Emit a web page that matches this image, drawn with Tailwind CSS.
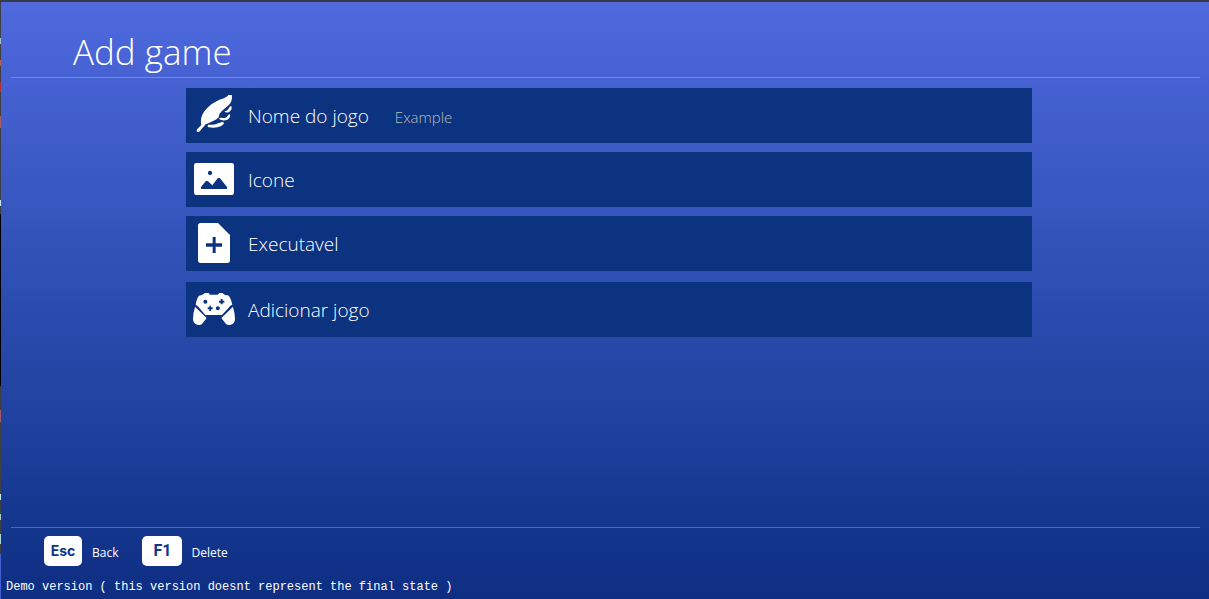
<!DOCTYPE html>
<html lang="pt">
<head>
<meta charset="utf-8">
<meta name="viewport" content="width=device-width, initial-scale=1">
<title>Add game</title>
<script src="https://cdn.jsdelivr.net/npm/@tailwindcss/browser@4"></script>
</head>
<body class="min-h-screen flex flex-col border-t-2 border-[#3a3b46] bg-[#3f3f42] font-['Open_Sans',sans-serif] text-white">
<div class="flex grow">
  <div class="w-px shrink-0 flex flex-col" aria-hidden="true">
    <span class="h-9"></span><span class="h-1.5 bg-[#9fc4cc]"></span><span class="h-4"></span><span class="h-1.5 bg-[#c05a4a]"></span><span class="h-4"></span><span class="h-2.5 bg-[#b03030]"></span><span class="h-6"></span><span class="h-3 bg-[#a85a62]"></span><span class="h-18"></span><span class="h-1.5 bg-[#bfeaf5]"></span><span class="h-2"></span><span class="h-43 bg-black"></span><span class="h-6"></span><span class="h-3 bg-[#a85a62]"></span><span class="h-18"></span><span class="h-1.5 bg-[#bfeaf5]"></span><span class="h-3.5"></span><span class="h-1.5 bg-[#a9cdd0]"></span><span class="h-3.5"></span><span class="h-2.5 bg-[#a9d9dc]"></span><span class="h-2.5"></span><span class="grow bg-[#4460d0]"></span>
  </div>
  <div class="flex min-w-0 grow flex-col bg-linear-to-b/srgb from-[#4f69de] via-[#2c4db0] to-[#0d2e82]">
    <header class="mr-[9px] ml-[10px] border-b border-[#7089e0] pt-[25px] pl-[62px]">
      <h1 class="text-[35px] leading-[50px] font-light">Add game</h1>
    </header>

    <main class="flex grow flex-col items-center pt-[10px] pl-2">
      <form class="flex w-[846px] max-w-full flex-col gap-[9px]">
        <div class="flex h-[55px] items-center bg-[#0c337f] pl-[7px]">
          <svg class="size-[42px] shrink-0" viewBox="39 33 126 126" fill="currentColor" aria-hidden="true">
            <path d="M50 142 Q49 136 55 132 L64 123 Q58 98 78 76 Q95 57 122 46 Q142 40 147 31 Q152 28 155 31 Q158 45 152 56 Q147 64 136 72 Q123 82 118 90 Q119 101 104 109 Q88 117 77 121 L60 141 Q54 147 50 142Z"/>
            <path d="M154 66 Q158 77 147 84 Q138 88 133 82 Q144 80 149 68Z M150 91 Q153 101 141 108 Q126 112 116 104 Q122 99 129 102 Q141 102 145 92Z M129 113 Q136 118 124 126 Q106 135 83 129 L84 122 Q102 124 114 118Z"/>
          </svg>
          <label for="name" class="ml-[13px] text-[19px] leading-7 font-light">Nome do jogo</label>
          <input id="name" type="text" placeholder="Example" class="ml-[26px] min-w-0 grow bg-transparent pt-0.5 text-[15px] leading-6 font-light outline-none placeholder:text-[#b9b9b9]">
        </div>
        <button type="button" class="flex h-[55px] items-center bg-[#0c337f] pl-[7px] text-left">
          <svg class="size-[42px] shrink-0" viewBox="39 27 126 126" fill="currentColor" aria-hidden="true">
            <path fill-rule="evenodd" d="M49 39H155Q162 39 162 46V128Q162 135 155 135H49Q42 135 42 128V46Q42 39 49 39Z M90 62.500a6.500 6.500 0 1 0 .1 0Z M63 117H141V111L120 85Q117 81 113 85L97 106L84 94Q80 90 77 94L63 111Z"/>
          </svg>
          <span class="ml-[13px] text-[19px] leading-7 font-light">Icone</span>
        </button>
        <button type="button" class="flex h-[55px] items-center bg-[#0c337f] pl-[7px] text-left">
          <svg class="size-[42px] shrink-0" viewBox="39 33 126 126" fill="currentColor" aria-hidden="true">
            <path fill-rule="evenodd" d="M62 33H114L150 69V145Q150 153 142 153H62Q54 153 54 145V41Q54 33 62 33Z M98 75V94H78V104H98V123H107V104H126V94H107V75Z"/>
          </svg>
          <span class="ml-[13px] text-[19px] leading-7 font-light">Executavel</span>
        </button>
        <button type="submit" class="mt-0.5 flex h-[55px] items-center bg-[#0c337f] pl-[7px] text-left">
          <svg class="size-[42px] shrink-0" viewBox="39 33 126 126" fill="currentColor" aria-hidden="true">
            <path fill-rule="evenodd" d="M78 45H86L90 50H113L118 45H128Q132 52 144 52Q152 58 157 80Q152 81 148 87L126 111H76L55 86Q51 81 47 81Q50 60 57 53Q70 51 73 46Z M76 65.500a6 6 0 1 0 .1 0Z M122 63V68H117V74H122V79H128V74H133V68H128V63Z M88 83V88H83V94H88V99H93V94H98V88H93V83Z M113.500 84.500a6 6 0 1 0 .1 0Z"/>
            <path d="M45 87Q48 88 51 92L80 120L66 138Q61 143 52 140Q40 138 39 124Q39 105 45 87Z M159 87Q156 88 153 92L124 120L138 138Q143 143 152 140Q164 138 165 124Q165 105 159 87Z"/>
          </svg>
          <span class="ml-[13px] text-[19px] leading-7 font-light">Adicionar jogo</span>
        </button>
      </form>
    </main>

    <footer class="pb-[3px]">
      <div class="mr-[9px] ml-[10px] flex gap-6 border-t border-[#4c6ab8] pt-2 pl-[33px]">
        <button type="button" class="flex items-center gap-[10px]">
          <kbd class="flex h-[30px] w-[38px] items-center justify-center rounded-[5px] bg-white font-['Inter',sans-serif] text-[14px] leading-5 font-bold text-[#12358c]">Esc</kbd>
          <span class="pt-1 text-[12px] leading-5">Back</span>
        </button>
        <button type="button" class="flex items-center gap-[9px]">
          <kbd class="flex h-[30px] w-10 items-center justify-center rounded-[5px] bg-white font-['Roboto',sans-serif] text-[16px] leading-5 font-bold text-[#12358c]">F1</kbd>
          <span class="pt-1 text-[12px] leading-5">Delete</span>
        </button>
      </div>
      <p class="mt-3 pl-[5px] font-['Liberation_Mono',monospace] text-[12px] leading-[18px]">Demo version ( this version doesnt represent the final state )</p>
    </footer>
  </div>
</div>
</body>
</html>
